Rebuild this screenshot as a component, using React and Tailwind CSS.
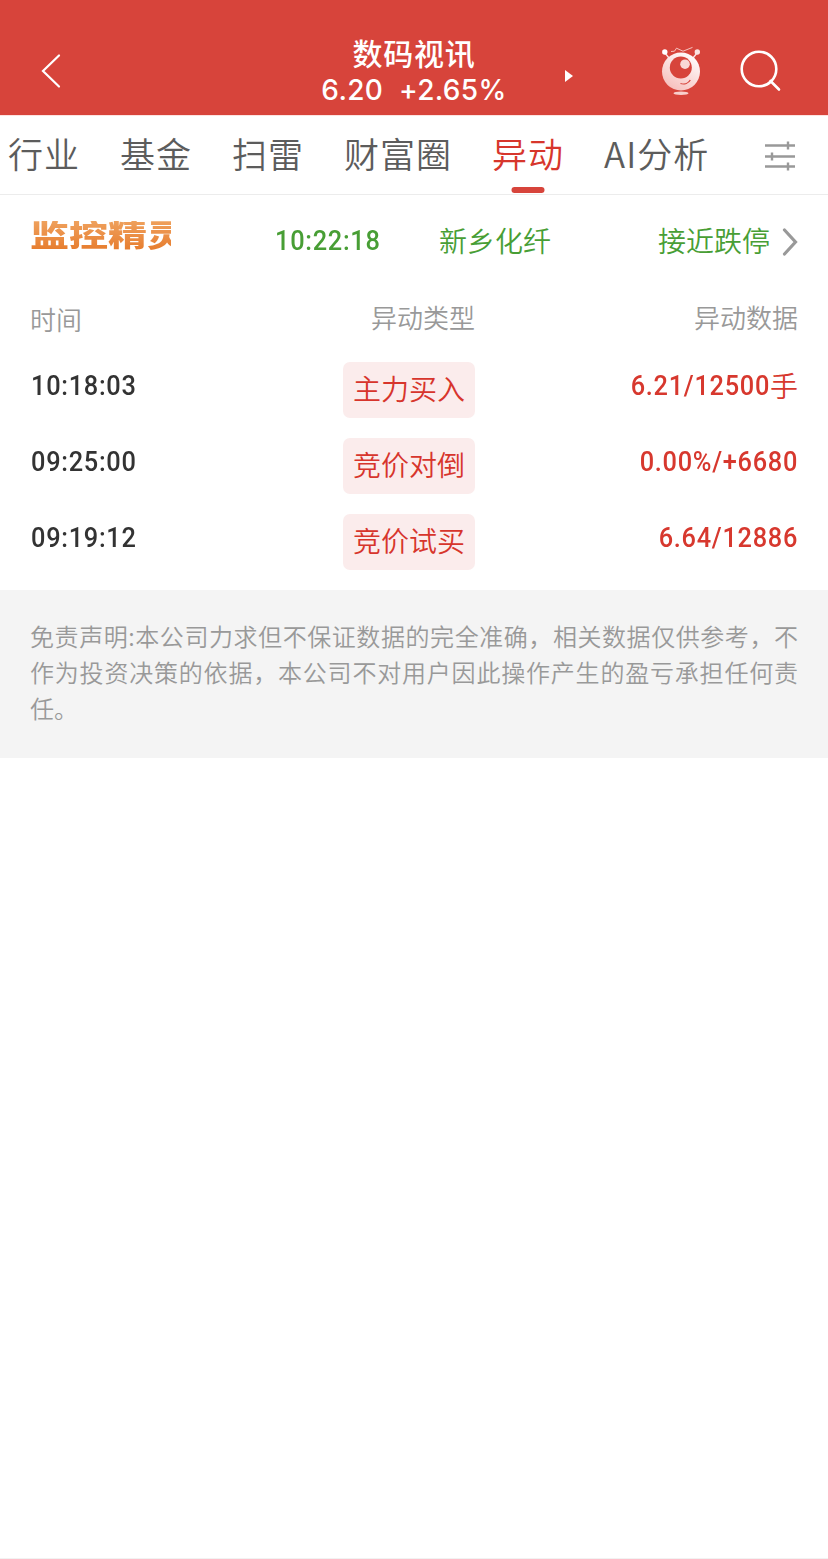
import React from 'react'

const tabs = ['行业', '基金', '扫雷', '财富圈', '异动', 'AI分析']

const records = [
  { time: '10:18:03', type: '主力买入', data: '6.21/12500', unit: '手' },
  { time: '09:25:00', type: '竞价对倒', data: '0.00%/+6680' },
  { time: '09:19:12', type: '竞价试买', data: '6.64/12886' },
]

const disclaimer = [
  '免责声明:本公司力求但不保证数据的完全准确，相关数据仅供参考，不',
  '作为投资决策的依据，本公司不对用户因此操作产生的盈亏承担任何责',
]

const RobotIcon = () => (
  <svg width="42" height="52" viewBox="0 0 42 52" fill="none">
    <defs>
      <linearGradient id="face" x1="0.8" y1="0" x2="0.2" y2="1">
        <stop offset="0" stopColor="#fff" />
        <stop offset="1" stopColor="#f6bcb9" />
      </linearGradient>
    </defs>
    <path d="M11 6.500l3.500-.3 2-3 6.500 3 9.500-3.800" stroke="#f8d0cd" strokeWidth="0.9" />
    <path d="M5 8l4 5M37 8l-4 5" stroke="#fbe3e1" strokeWidth="1.400" />
    <circle cx="4.800" cy="7" r="2.700" fill="#fff" />
    <circle cx="37.300" cy="7" r="2.700" fill="#fbe3e1" />
    <circle cx="21" cy="26.500" r="19" fill="url(#face)" />
    <circle cx="20.800" cy="22.500" r="11" fill="#d7443b" />
    <circle cx="25" cy="19.200" r="4.800" fill="#f9d8d6" />
    <path d="M20.500 38.500c4 1.200 8-.3 9.800-3.500" stroke="#d7443b" strokeWidth="1.300" />
    <ellipse cx="21" cy="48.300" rx="7.500" ry="1.700" fill="#f8cfcc" />
  </svg>
)

const Header = () => (
  <div className="flex h-[115px] items-start bg-[#d7443b] text-white">
    <div className="flex w-[280px] pl-[40px] pt-[53px]">
      <svg width="22" height="36" viewBox="0 0 22 36" fill="none" stroke="currentColor" strokeWidth="2.200" strokeLinecap="round">
        <path d="M19 2.500L3 18 19 33.500" />
      </svg>
    </div>
    <div className="flex w-[268px] flex-col items-center pt-[34px]">
      <h1 className="text-[30px] font-medium leading-[36px] tracking-[0.7px]">数码视讯</h1>
      <div className="whitespace-pre font-['Inter'] text-[28px] font-medium leading-[40px] tracking-[0.35px]">6.20  +2.65%</div>
    </div>
    <div className="w-[112px] pl-[17px] pt-[69px]">
      <svg width="9" height="14" viewBox="0 0 9 14" fill="currentColor">
        <path d="M0 1l8 6-8 6z" />
      </svg>
    </div>
    <div className="pt-[45px]">
      <RobotIcon />
    </div>
    <div className="pl-[37px] pt-[50px]">
      <svg width="42" height="42" viewBox="0 0 42 42" fill="none" stroke="currentColor" strokeWidth="2.600" strokeLinecap="round">
        <circle cx="20" cy="19" r="17.300" />
        <path d="M31.500 31l8.500 8.500" />
      </svg>
    </div>
  </div>
)

const TabBar = () => (
  <div className="flex h-[80px] items-start justify-between border-b border-t border-b-[#ececec] border-t-[#fde3e1] pl-[8px] pr-[32px]">
    <div className="flex gap-[40px]">
      {tabs.map((tab) => (
        <div
          key={tab}
          className={`relative h-[78px] whitespace-nowrap pt-[11px] text-[35px] font-[350] leading-[52px] tracking-[1px] ${
            tab === '异动' ? 'text-[#d7362c]' : 'text-[#5c5c5c]'
          }`}
        >
          {tab}
          {tab === '异动' && (
            <span className="absolute bottom-[1px] left-1/2 h-[6px] w-[33px] -translate-x-1/2 rounded-full bg-[#d7443b]"></span>
          )}
        </div>
      ))}
    </div>
    <svg className="mt-[23px]" width="32" height="32" viewBox="0 0 32 32" fill="none" stroke="#999" strokeWidth="2.400">
      <path d="M1 6.500h30M1 17.500h30M1 27.500h30M24 2.500v8M8 13.500v8M24 23.500v8" />
    </svg>
  </div>
)

const MonitorBar = () => (
  <div className="flex h-[92px] items-center pl-[30px] pr-[30px] text-[28px] leading-[40px] text-[#489e35]">
    <div className="mb-[11px] h-[30px] w-[141px] overflow-hidden">
      <div className="-mt-[2px] origin-left scale-x-[1.300] whitespace-nowrap bg-gradient-to-b from-[#efa35f] to-[#e67a28] bg-clip-text pb-[4px] text-[30px] font-black leading-[29px] text-transparent">
        监控精灵
      </div>
    </div>
    <div className="w-[268px] pl-[104px] font-['Roboto'] font-medium tracking-[0.8px]">
      <span className="inline-block origin-left scale-x-[0.905]">10:22:18</span>
    </div>
    <span className="w-[219px] pb-[2px] font-[350]">新乡化纤</span>
    <span className="whitespace-nowrap pb-[2px] font-[350]">接近跌停</span>
    <svg className="ml-[12px] mt-[2px] shrink-0" width="16" height="30" viewBox="0 0 16 30" fill="none" stroke="#999" strokeWidth="3.200" strokeLinecap="round">
      <path d="M2.500 3l11 12-11 12" />
    </svg>
  </div>
)

const RecordTable = () => (
  <div className="px-[30px]">
    <div className="flex h-[75px] items-start pt-[12px] text-[26px] font-[350] leading-[36px] text-[#999]">
      <span className="w-[222px] pt-[2px]">时间</span>
      <span className="w-[223px] text-right">异动类型</span>
      <span className="flex-1 text-right">异动数据</span>
    </div>
    {records.map((record) => (
      <div key={record.time} className="flex h-[76px] items-start text-[28px] font-medium leading-[47px]">
        <div className="w-[313px] pl-px font-['Roboto'] tracking-[0.8px] text-[#333]">
          <span className="inline-block origin-left scale-x-[0.905]">{record.time}</span>
        </div>
        <span className="h-[56px] w-[132px] rounded-[7px] bg-[#fbecec] text-center font-[350] leading-[53px] text-[#d7352c]">
          {record.type}
        </span>
        <div className="flex flex-1 justify-end text-[#d7382e]">
          <span className="origin-right scale-x-[0.905] font-['Roboto'] tracking-[0.8px]">{record.data}</span>
          {record.unit && <span className="font-[350]">{record.unit}</span>}
        </div>
      </div>
    ))}
  </div>
)

const Disclaimer = () => (
  <div className="h-[168px] bg-[#f4f4f4] px-[30px] pt-[28px] text-[24px] font-[350] leading-[36px] text-[#999]">
    {disclaimer.map((line) => (
      <p key={line} className="whitespace-nowrap [text-align-last:justify]">{line}</p>
    ))}
    <p>任。</p>
  </div>
)

const App = () => {
  return (
    <div lang="zh-CN" className="flex h-[1559px] w-[828px] flex-col overflow-hidden border-b border-[#f2f2f2] bg-white font-['Noto_Sans_CJK_SC',sans-serif]">
      <Header />
      <TabBar />
      <MonitorBar />
      <RecordTable />
      <Disclaimer />
    </div>
  )
}

export default App
